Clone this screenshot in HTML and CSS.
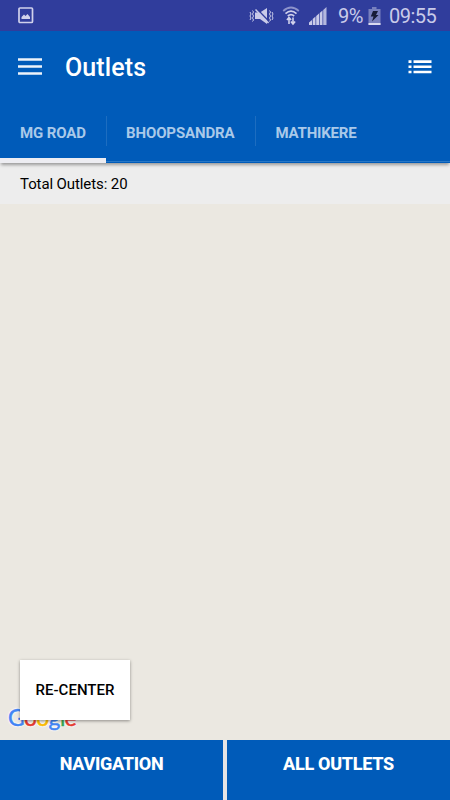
FILE: index.html
```html
<!DOCTYPE html>
<html lang="en">
<head>
    <meta charset="UTF-8">
    <meta name="viewport" content="width=device-width, initial-scale=1.0">
    <title>Outlets</title>
    <link rel="stylesheet" href="styles.css">
</head>
<body>
    <div class="statusbar">
        <svg class="icon-image" width="16" height="17" viewBox="0 0 16 17">
            <rect x="1" y="1" width="13.5" height="14.5" rx="1" fill="none" stroke="#d0d1eb" stroke-width="1.7"/>
            <path d="M3.5 12V10L6 7.5L7.5 9L9.5 7L12 10V12Z" fill="#d0d1eb"/>
        </svg>
        <div class="status-right">
            <svg class="icon-mute" width="26" height="18" viewBox="0 0 26 18">
                <path d="M6 5.5H11L18 1V17L11 12H6Z" fill="#c9cbe9"/>
                <path d="M7.5 1.5L20 14.5" stroke="#303d9c" stroke-width="1.6"/>
                <path d="M6.5 2.5L19.5 16" stroke="#c9cbe9" stroke-width="1.5"/>
                <path d="M3.5 3.5L4.5 5L3.5 7L4.5 9L3.5 11L4.5 13L3.5 14.5M1 5L2 7L1 9L2 11L1 13M20.5 3.5L21.5 5L20.5 7L21.5 9L20.5 11L21.5 13L20.5 14.5M23 5L24 7L23 9L24 11L23 13" fill="none" stroke="#c9cbe9" stroke-width="1"/>
            </svg>
            <svg class="icon-wifi" width="18" height="20" viewBox="0 0 18 20">
                <path d="M1.2 5Q9 -2 16.8 5" fill="none" stroke="#8d93cb" stroke-width="1.7"/>
                <path d="M3.5 7.6Q9 2.7 14.5 7.6M5.8 10Q9 7.2 12.2 10" fill="none" stroke="#d0d1eb" stroke-width="1.7"/>
                <path d="M7 18V12M4.9 14L7 11.5L9.1 14M11 11.5V17M8.9 15.5L11 18L13.1 15.5" fill="none" stroke="#d0d1eb" stroke-width="1.6"/>
            </svg>
            <svg class="icon-signal" width="18" height="18" viewBox="0 0 18 18">
                <path d="M0 18V15.5L3 13V18ZM3.7 18V12L6.5 9.5V18ZM7.2 18V9L10 6.5V18ZM10.7 18V6L13.5 3.5V18Z" fill="#c9cbe9"/>
                <path d="M14.2 18V3L17.5 0V18Z" fill="#b3b7de"/>
            </svg>
            <span class="percent">9%</span>
            <svg class="icon-battery" width="13" height="18" viewBox="0 0 13 18">
                <path d="M4 0H8.5V2H12.5V18H0.5V2H4Z" fill="#7880be"/>
                <rect x="0.5" y="16" width="12" height="2" fill="#d9daf0"/>
                <path d="M5 4H10L8 8H10.5L4 14.5L5.5 9.5H2.8Z" fill="#171c38"/>
            </svg>
            <span class="clock">09:55</span>
        </div>
    </div>

    <div class="appbar">
        <svg class="icon-menu" width="24" height="18" viewBox="0 0 24 18">
            <path d="M0 1.5H24M0 8.5H24M0 15.5H24" stroke="#edf3fa" stroke-width="2.5"/>
        </svg>
        <h1>Outlets</h1>
        <svg class="icon-list" width="24" height="14" viewBox="0 0 24 14">
            <path d="M0.5 1.6H3.5M5.5 1.6H23.5M0.5 6.8H3.5M5.5 6.8H23.5M0.5 12H3.5M5.5 12H23.5" stroke="#fff" stroke-width="2.6"/>
        </svg>
    </div>

    <div class="tabs">
        <div class="tab active"><span>MG ROAD</span></div>
        <div class="tab"><span>BHOOPSANDRA</span></div>
        <div class="tab last"><span>MATHIKERE</span></div>
    </div>

    <div class="total">Total Outlets: 20</div>

    <div class="map">
        <div class="google"><span class="blue">G</span><span class="red">o</span><span class="yellow">o</span><span class="blue">g</span><span class="green">l</span><span class="red">e</span></div>
        <button class="recenter">RE-CENTER</button>
    </div>

    <div class="bottom">
        <button>NAVIGATION</button>
        <button>ALL OUTLETS</button>
    </div>
</body>
</html>
```
FILE: styles.css
```css
* {
    box-sizing: border-box;
}

body {
    margin: 0;
    height: 800px;
    display: flex;
    flex-direction: column;
    overflow: hidden;
    background-color: #ebe8e1;
    font-family: Roboto, sans-serif;
}

svg {
    display: block;
    flex: none;
}

button {
    border: none;
    padding: 0;
    font-family: inherit;
}

.statusbar {
    height: 31px;
    flex: none;
    display: flex;
    justify-content: space-between;
    align-items: center;
    padding: 0 13px 0 18px;
    background-color: #303d9c;
    color: #c9cbe9;
}

.status-right {
    display: flex;
    align-items: center;
}

.icon-wifi {
    margin-left: 7px;
}

.icon-signal {
    margin-left: 9px;
}

.percent {
    margin-left: 11px;
    width: 26px;
    font-size: 20px;
    letter-spacing: -0.6px;
}

.icon-battery {
    margin-left: 4px;
}

.clock {
    margin-left: 8px;
    width: 48px;
    font-size: 20px;
    letter-spacing: -0.5px;
}

.appbar {
    height: 73px;
    flex: none;
    display: flex;
    align-items: center;
    padding: 0 18px;
    background-color: #005bb9;
}

.icon-menu {
    margin-bottom: 2px;
}

.appbar h1 {
    margin: 0 0 0 23px;
    font-size: 25px;
    font-weight: 500;
    letter-spacing: 0.1px;
    color: #fff;
}

.icon-list {
    margin-left: auto;
    margin-bottom: 2px;
}

.tabs {
    height: 58px;
    flex: none;
    display: flex;
    position: relative;
    background-color: #005bb9;
    border-bottom: 1px solid #2877c5;
    box-shadow: 0 1px 0 #005bb9, 0 4px 3px -1px rgba(0, 0, 0, 0.35);
}

.tab {
    height: 58px;
    padding: 12px 0 16px;
}

.tab span {
    display: block;
    height: 30px;
    padding: 0 20px;
    border-right: 1px solid #1d6dc0;
    font-size: 15px;
    font-weight: 700;
    line-height: 34px;
    letter-spacing: -0.12px;
    white-space: nowrap;
    color: #a9c9e9;
}

.tab.active {
    width: 106px;
    height: 59px;
    border-bottom: 5px solid #ededf2;
}

.tab.active span {
    width: 107px;
}

.tab.last span {
    border-right: none;
    letter-spacing: -0.2px;
}

.total {
    height: 42px;
    flex: none;
    padding: 2px 20px 0;
    background-color: #ededed;
    font-size: 15px;
    line-height: 40px;
    letter-spacing: -0.1px;
    color: #000;
}

.map {
    flex: 1;
    display: flex;
    align-items: flex-end;
    padding: 0 20px 20px;
    position: relative;
    background-color: #ebe8e1;
}

/* map watermark, partly hidden by the button */
.google {
    position: absolute;
    left: 8px;
    bottom: 8px;
    font-family: Lato, sans-serif;
    font-size: 23px;
    line-height: 30px;
    letter-spacing: -0.7px;
    -webkit-text-stroke: 0.5px;
    text-shadow: 0 0 2px #fff, 0 0 2px #fff, 0 0 3px #fff;
}

.blue {
    color: #4285f4;
}

.red {
    color: #e53b30;
}

.yellow {
    color: #fbbc05;
}

.green {
    color: #34a853;
}

.recenter {
    position: relative;
    width: 110px;
    height: 60px;
    background-color: #fff;
    box-shadow: 0 1px 3px rgba(0, 0, 0, 0.4);
    font-size: 15px;
    font-weight: 500;
    color: #000;
}

.bottom {
    height: 60px;
    flex: none;
    display: flex;
    gap: 4px;
    background-color: #e4e4e6;
}

.bottom button {
    flex: 1;
    padding-bottom: 14px;
    background-color: #005bb9;
    font-size: 18px;
    font-weight: 800;
    letter-spacing: -0.3px;
    color: #fff;
}
```
